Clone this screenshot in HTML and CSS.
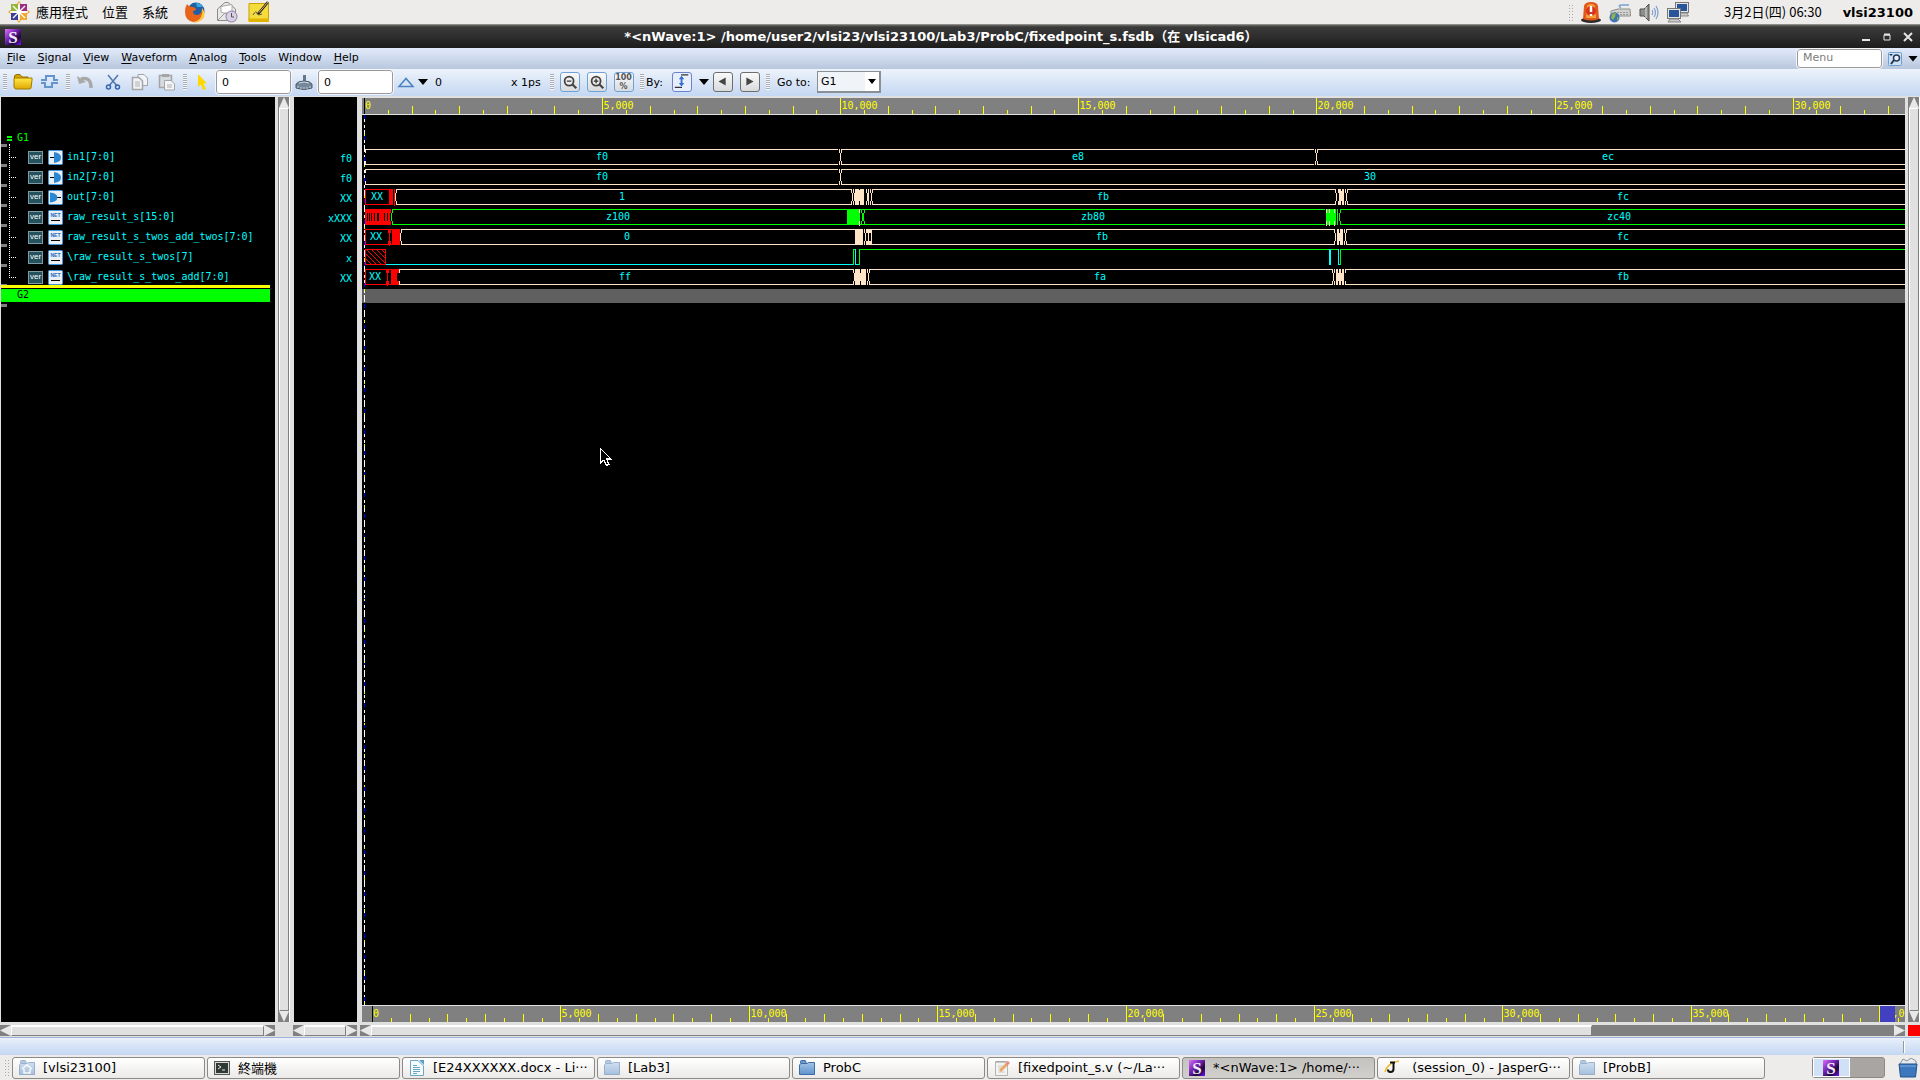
FILE: index.html
```html
<!DOCTYPE html>
<html lang="zh-Hant">
<head>
<meta charset="utf-8">
<title>nWave</title>
<link rel="stylesheet" href="styles.css">
</head>
<body>
<svg class="defs" aria-hidden="true">
  <defs>
    <linearGradient id="purple" x1="0" y1="0" x2="1" y2="1"><stop offset="0" stop-color="#e070ff"/><stop offset=".45" stop-color="#6a1fa8"/><stop offset=".7" stop-color="#1c0838"/><stop offset="1" stop-color="#7a10ff"/></linearGradient>
    <linearGradient id="blueFolder" x1="0" y1="0" x2="0" y2="1"><stop offset="0" stop-color="#a3c4e8"/><stop offset="1" stop-color="#5f93cc"/></linearGradient>
    <linearGradient id="gold" x1="0" y1="0" x2="0" y2="1"><stop offset="0" stop-color="#ffe94a"/><stop offset="1" stop-color="#e0a800"/></linearGradient>
    <pattern id="hatch" width="5" height="5" patternUnits="userSpaceOnUse"><path d="M0 0L5 5M-1 4L1 6M4 -1L6 1" stroke="#f00" stroke-width="1"/></pattern>
    <symbol id="s-logo" viewBox="0 0 16 16"><rect width="16" height="16" fill="url(#purple)"/><text x="8" y="14" text-anchor="middle" font-family="Liberation Serif, serif" font-weight="bold" font-size="17" fill="#f4ecfa">S</text></symbol>
    <symbol id="folder" viewBox="0 0 16 16"><path d="M1.500 3.500V1.500Q1.500 .5 2.500 .5H6Q7 .5 7 2.500V3.500" fill="#6f9acb" stroke="#3d6ba5"/><path d="M.5 14.500V5L2 3.500H8L9.500 2.500H15.500V14.500Z" fill="url(#blueFolder)" stroke="#3d6ba5"/></symbol>
    <symbol id="net" viewBox="0 0 15 15"><rect x=".5" y=".5" width="14" height="14" rx="1" fill="#eceff2" stroke="#3d94e0"/><text x="7.500" y="7" text-anchor="middle" font-family="Liberation Sans, sans-serif" font-weight="bold" font-size="5" fill="#1669c4">NET</text><path d="M3 10.500H12" stroke="#000"/></symbol>
    <symbol id="in-port" viewBox="0 0 15 15"><rect x=".5" y=".5" width="14" height="14" rx="1" fill="#eceff2" stroke="#3d94e0"/><path d="M2 7.500H7" stroke="#000"/><path d="M6 2Q13 3 13 7.500T6 13Z" fill="#2b86d4"/></symbol>
    <symbol id="out-port" viewBox="0 0 15 15"><rect x=".5" y=".5" width="14" height="14" rx="1" fill="#eceff2" stroke="#3d94e0"/><path d="M9 7.500H13" stroke="#000"/><path d="M2 2.500Q9 3 9.500 7.500Q9 12 2 12.500Z" fill="#2b86d4"/></symbol>
  </defs>
</svg>

<header class="panel">
  <nav class="panel-menus">
    <svg class="i22" viewBox="0 0 22 22"><path d="M11 0L14 4H8ZM11 22L8 18H14ZM0 11L4 8V14ZM22 11L18 14V8Z" fill="#e8a33a"/><path d="M3 3H10V10H3Z" fill="#93b63a"/><path d="M12 3H19V10H12Z" fill="#9a2d86"/><path d="M3 12H10V19H3Z" fill="#3b3f96"/><path d="M12 12H19V19H12Z" fill="#efa72f"/><path d="M5 5L17 17M17 5L5 17M11 2V20M2 11H20" stroke="#fff" stroke-width="1.300"/></svg>
    <button class="panel-item">應用程式</button>
    <button class="panel-item">位置</button>
    <button class="panel-item">系統</button>
    <button class="launcher" aria-label="Firefox"><svg class="i22" viewBox="0 0 22 22"><circle cx="12" cy="10" r="8.500" fill="#1e5fa8"/><path d="M12 2Q17 2 19 6L13 6Z" fill="#35a6e0"/><path d="M3 3Q5 6 8 6Q12 6 12 9L9 10Q9 14 13 14Q18 14 18 7Q22 12 19 17Q15 22 9 21Q1 19 1 11Q1 6 3 3Z" fill="#e8641b"/><path d="M18 7Q22 12 19 17Q15 22 9 21Q15 20 17 16Q19 12 18 7Z" fill="#ffcb2e"/></svg></button>
    <button class="launcher" aria-label="Mail"><svg class="i22" viewBox="0 0 22 22"><path d="M1.500 8L9 1.500H12L19.500 8V19.500H1.500Z" fill="#e8e8e6" stroke="#8b8b88"/><path d="M5 5.500L16 3.500V11L10.500 13L5 11Z" fill="#fff" stroke="#aaa"/><path d="M2 19L9 12H12L19 19" fill="none" stroke="#999"/><circle cx="15.500" cy="15.500" r="5.500" fill="#d9d0e4" stroke="#8e7aa6"/><path d="M15.500 12V16H18" fill="none" stroke="#555"/></svg></button>
    <button class="launcher" aria-label="Notes"><svg class="i22" viewBox="0 0 22 22"><path d="M1 2.500H20.500V19.500H1Z" fill="#f5dc3d" stroke="#c9a100"/><path d="M.5 17.500H21V21H.5Z" fill="#e0b400"/><path d="M5 14Q8 9 9 12Q9 15 14 13" fill="none" stroke="#555"/><path d="M20 1L10 13" stroke="#222" stroke-width="2.500"/><path d="M20 1L11 11.500" stroke="#d8b26a" stroke-width="1"/></svg></button>
  </nav>
  <div class="tray">
    <span class="dots"></span>
    <svg class="i22" viewBox="0 0 22 22"><ellipse cx="11" cy="19" rx="10" ry="3" fill="#2a2a2a"/><path d="M3 18L4 5Q5 1 11 1T18 5L19 18Q11 21 3 18Z" fill="#e2571b"/><path d="M6 17L7 5Q8 3 11 3T15 5L16 17Z" fill="#f8a33a"/><circle cx="11" cy="10" r="5" fill="#d8331c"/><path d="M11 5V11M11 13V15" stroke="#fff" stroke-width="2.500"/></svg>
    <svg class="i22" viewBox="0 0 22 22"><path d="M2 10L9 8H21L21.500 15H2Z" fill="#d2d3cf" stroke="#8d8f8b"/><path d="M5 11.500H20M5 13.500H20" stroke="#999" stroke-dasharray="2 1"/><path d="M12 7Q8 4 13 4H20" fill="none" stroke="#7ba1cf" stroke-width="1.500"/><circle cx="5.500" cy="16.500" r="5" fill="#3f75b5"/><path d="M3 13L7 12L6 16L4 19L2 17ZM8 16L10 17L8 20Z" fill="#8fb34a"/></svg>
    <svg class="i22" viewBox="0 0 22 22"><path d="M2 8H6L11 3V20L6 15H2Z" fill="#8c8f8b" stroke="#4f514e"/><path d="M8 6V17" stroke="#ddd"/><path d="M14 9Q15.500 11.500 14 14M16 7Q19 11.500 16 16M18 5Q22 11.500 18 18" fill="none" stroke="#7c9fcc" stroke-width="1.200"/></svg>
    <svg class="i22" viewBox="0 0 22 22"><rect x="8.500" y="1.500" width="13" height="10" fill="#e4e4e0" stroke="#777"/><rect x="10" y="3" width="10" height="7" fill="#28549b"/><path d="M13 12H20L21.500 15H12Z" fill="#ccc" stroke="#888"/><rect x=".5" y="7.500" width="13" height="10" fill="#e4e4e0" stroke="#777"/><rect x="2" y="9" width="10" height="7" fill="#28549b"/><path d="M3 18H11L14 21H1Z" fill="#ccc" stroke="#888"/></svg>
    <span class="clock">3月2日(四) 06:30</span>
    <span class="user">vlsi23100</span>
  </div>
</header>

<div class="titlebar">
  <svg class="i16"><use href="#s-logo"/></svg>
  <h1 class="title">*&lt;nWave:1&gt; /home/user2/vlsi23/vlsi23100/Lab3/ProbC/fixedpoint_s.fsdb（在 vlsicad6）</h1>
  <button class="winbtn" aria-label="Minimize"><svg class="i10" viewBox="0 0 10 10"><path d="M1 8H9" stroke="#e4e4e4" stroke-width="2"/></svg></button>
  <button class="winbtn" aria-label="Maximize"><svg class="i10" viewBox="0 0 10 10"><path d="M2 3H8V8H2Z" fill="none" stroke="#e4e4e4" stroke-width="1"/><path d="M2 2.500H8" stroke="#e4e4e4" stroke-width="2"/></svg></button>
  <button class="winbtn" aria-label="Close"><svg class="i10" viewBox="0 0 10 10"><path d="M1 1L9 9M9 1L1 9" stroke="#e4e4e4" stroke-width="2"/></svg></button>
</div>

<div class="menubar">
  <nav class="menus">
    <button><u>F</u>ile</button><button><u>S</u>ignal</button><button><u>V</u>iew</button><button><u>W</u>aveform</button><button><u>A</u>nalog</button><button><u>T</u>ools</button><button>W<u>i</u>ndow</button><button><u>H</u>elp</button>
  </nav>
  <div class="search">
    <input class="field menu-field" type="text" placeholder="Menu" aria-label="Menu search">
    <button aria-label="Find command"><svg class="i14" viewBox="0 0 14 14"><rect x=".5" y=".5" width="13" height="13" rx="1" fill="#cfe0f3" stroke="#6f9fd0"/><circle cx="8.500" cy="6" r="3" fill="#eef" stroke="#233a55" stroke-width="1.500"/><path d="M6 8L3 12" stroke="#233a55" stroke-width="2"/><path d="M1 2H5L3 4Z" fill="#233a55"/></svg></button>
    <span class="caret"></span>
  </div>
</div>

<div class="toolbar">
  <span class="grip"></span>
  <button class="tool" aria-label="Open"><svg class="i20" viewBox="0 0 20 20"><path d="M1.500 15V4Q2 2.500 4 2.500H7L9 5H15V8" fill="#d9a600" stroke="#8f6d00"/><path d="M1 15V6H19V8L18 16Q18 17 16 17H3Q1.500 17 1 15Z" fill="url(#gold)" stroke="#a07a00"/></svg></button>
  <button class="tool" aria-label="Get signals"><svg class="i20" viewBox="0 0 20 20"><path d="M1 8H6V4H14V8H18M1 11H5V15H12V11H18" fill="none" stroke="#6594cc" stroke-width="2"/></svg></button>
  <span class="grip"></span>
  <button class="tool" aria-label="Undo"><svg class="i20" viewBox="0 0 20 20"><path d="M5 7Q15 4 15 16" fill="none" stroke="#a8a8a8" stroke-width="3.500"/><path d="M1 4L3 12L10 10Z" fill="#a8a8a8"/></svg></button>
  <button class="tool" aria-label="Cut"><svg class="i20" viewBox="0 0 20 20"><path d="M5 3L14 14M15 3L6 14" stroke="#5478ae" stroke-width="1.500"/><circle cx="5.500" cy="15" r="2" fill="none" stroke="#3565b0" stroke-width="1.500"/><circle cx="14.500" cy="15" r="2" fill="none" stroke="#3565b0" stroke-width="1.500"/></svg></button>
  <button class="tool" aria-label="Copy"><svg class="i20" viewBox="0 0 20 20"><path d="M8 2.500H14L17.500 6V13.500H8Z" fill="#f0f3f7" stroke="#a5a5a5"/><path d="M2.500 5.500H9L12.500 9V17.500H2.500Z" fill="#f0f3f7" stroke="#a5a5a5" stroke-width="1.500"/><path d="M5 10H10M5 12H10M5 14H10" stroke="#b0b0b0"/></svg></button>
  <button class="tool" aria-label="Paste"><svg class="i20" viewBox="0 0 20 20"><path d="M2.500 3.500H14.500V15.500H2.500Z" fill="#d6dbe2" stroke="#a5a5a5" stroke-width="1.500"/><path d="M5 2H12V5H5Z" fill="#a5a5a5"/><path d="M7.500 8.500H14L17.500 12V18H7.500Z" fill="#f3f5f8" stroke="#a5a5a5"/><path d="M10 13H15M10 15H15" stroke="#b0b0b0"/></svg></button>
  <span class="grip"></span>
  <button class="tool" aria-label="Select cursor"><svg class="i20" viewBox="0 0 20 20"><path d="M5 2V15L8 12.500L10 18L13 17L10.500 11.500H14Z" fill="#ffd800"/></svg></button>
  <input class="field time-field" type="text" value="0" aria-label="Cursor time">
  <button class="tool" aria-label="Snap marker"><svg class="i20" viewBox="0 0 20 20"><path d="M8 3H11V10H8Z" fill="#65788a"/><path d="M1 12Q3 9 9 9T17 12V16Q9 19 1 16Z" fill="#75889a" stroke="#4d5c6a"/><path d="M4 11Q9 9 14 11" stroke="#d0dae4" fill="none"/><path d="M3 14V16M6 15V17M9 15V17M12 15V17M15 14V16" stroke="#ccd"/></svg></button>
  <input class="field time-field" type="text" value="0" aria-label="Marker time">
  <button class="tool delta" aria-label="Delta"><svg class="i20" viewBox="0 0 20 20"><path d="M2 14.500L9 6.500L16 14.500Z" fill="#d5e4f6" stroke="#4c80bf" stroke-width="1.500"/></svg></button>
  <span class="caret"></span>
  <output class="delta-value">0</output>
  <span class="unit">x 1ps</span>
  <span class="grip"></span>
  <button class="tool boxed" aria-label="Zoom out"><svg class="i20" viewBox="0 0 20 20"><circle cx="9" cy="9" r="5" fill="#eee" stroke="#444" stroke-width="2"/><path d="M12.500 12.500L17 17" stroke="#444" stroke-width="2.500"/><path d="M6.500 9H11.500" stroke="#333" stroke-width="1.500"/></svg></button>
  <button class="tool boxed" aria-label="Zoom in"><svg class="i20" viewBox="0 0 20 20"><circle cx="9" cy="9" r="5" fill="#eee" stroke="#444" stroke-width="2"/><path d="M12.500 12.500L17 17" stroke="#444" stroke-width="2.500"/><path d="M6.500 9H11.500M9 6.500V11.500" stroke="#333" stroke-width="1.500"/></svg></button>
  <button class="tool boxed" aria-label="Zoom all"><span class="zoom-all">100<br>%</span></button>
  <span class="grip"></span>
  <span class="by">By:</span>
  <button class="tool boxed edge" aria-label="Any edge"><svg class="i20" viewBox="0 0 20 20"><path d="M9 2H17M2 16H10" stroke="#333" stroke-width="1.500"/><path d="M9.500 5V13" stroke="#2f6fd6" stroke-width="2"/><path d="M6.500 7L9.500 3L12.500 7ZM6.500 11L9.500 15L12.500 11Z" fill="#2f6fd6"/></svg></button>
  <span class="caret"></span>
  <button class="tool boxed gray" aria-label="Previous"><svg class="i20" viewBox="0 0 20 20"><path d="M13 5V14L5 9.500Z" fill="#444"/></svg></button>
  <button class="tool boxed gray" aria-label="Next"><svg class="i20" viewBox="0 0 20 20"><path d="M6 5V14L14 9.500Z" fill="#444"/></svg></button>
  <span class="grip"></span>
  <label class="goto" for="goto">Go to:</label>
  <span class="combo"><select id="goto"><option>G1</option></select><span class="combo-arrow"><span class="caret small"></span></span></span>
</div>

<main class="workspace">
  <section class="tree">
    <div class="group"><span class="expander"></span>G1</div>
    <ul class="signals">
      <li><span class="ver">ver</span><svg class="i15"><use href="#in-port"/></svg>in1[7:0]</li>
      <li><span class="ver">ver</span><svg class="i15"><use href="#in-port"/></svg>in2[7:0]</li>
      <li><span class="ver">ver</span><svg class="i15"><use href="#out-port"/></svg>out[7:0]</li>
      <li><span class="ver">ver</span><svg class="i15"><use href="#net"/></svg>raw_result_s[15:0]</li>
      <li><span class="ver">ver</span><svg class="i15"><use href="#net"/></svg>raw_result_s_twos_add_twos[7:0]</li>
      <li><span class="ver">ver</span><svg class="i15"><use href="#net"/></svg>\raw_result_s_twos[7]</li>
      <li><span class="ver">ver</span><svg class="i15"><use href="#net"/></svg>\raw_result_s_twos_add[7:0]</li>
    </ul>
    <div class="group selected">G2</div>
  </section>
  <div class="vbar"><span class="arrow up"></span><span class="thumb"></span><span class="arrow down"></span></div>
  <ul class="values">
    <li>f0</li><li>f0</li><li>XX</li><li>xXXX</li><li>XX</li><li>x</li><li>XX</li>
  </ul>
  <section class="wave">
    <svg class="ruler" data-origin="2" data-step="47.62" data-max="34"></svg>
    <svg class="plot">
      <g class="bus">
        <path d="M3 34.500H476M480 34.500H952M956 34.500H6000M3 49.500H476M480 49.500H952M956 49.500H6000M3.500 34V38M3.500 46V50M477.500 34V38M479.500 34V38M478.500 38V46M477.500 46V50M479.500 46V50M953.500 34V38M955.500 34V38M954.500 38V46M953.500 46V50M955.500 46V50"/>
        <path d="M3 54.500H476M480 54.500H6000M3 69.500H476M480 69.500H6000M3.500 54V58M3.500 66V70M477.500 54V58M479.500 54V58M478.500 58V66M477.500 66V70M479.500 66V70"/>
        <path d="M34 74.500H489M511 74.500H973M986 74.500H6000M34 89.500H489M511 89.500H973M986 89.500H6000M34.500 74V78M33.500 78V86M34.500 86V90M489.500 74V78M490.500 78V86M489.500 86V90M491.500 74V78M492.500 78V86M491.500 86V90M504.500 74V78M505.500 78V86M504.500 86V90M506.500 74V90M508.500 74V78M509.500 78V86M508.500 86V90M510.500 74V78M510.500 86V90M973.500 74V78M974.500 78V86M973.500 86V90M976.500 74V78M976.500 86V90M983.500 74V78M984.500 78V86M983.500 86V90M985.500 74V78M985.500 86V90"/>
        <path d="M39 114.500H494M510 114.500H972M985 114.500H6000M39 129.500H494M510 129.500H972M985 129.500H6000M39.500 114V118M38.500 118V126M39.500 126V130M502.500 114V118M503.500 118V126M502.500 126V130M506.500 114V130M509.500 114V130M972.500 114V118M973.500 118V126M972.500 126V130M982.500 114V118M983.500 118V126M982.500 126V130M984.500 114V118M984.500 126V130"/>
        <path d="M37 154.500H491M513 154.500H970M984 154.500H6000M37 169.500H491M507 169.500H970M984 169.500H6000M37.500 154V158M37.500 166V170M491.500 154V158M492.500 158V166M491.500 166V170M505.500 154V158M506.500 158V166M505.500 166V170M507.500 154V158M507.500 166V170M970.500 154V158M971.500 158V166M970.500 166V170M972.500 154V158M972.500 166V170M983.500 154V158M983.500 166V170M507 154.500H513"/>
      </g>
      <g class="bus-fill">
        <path d="M493 74H497V75H498V74H502V90H498V86H497V90H493ZM977 74H979V76H980V74H982V90H980V86H979V90H977ZM493 114H501V130H493ZM504 114H510V118H504ZM504 126H510V130H504ZM975 114H977V118H978V114H981V130H978V126H977V130H975ZM493 154H498V158H499V154H504V170H499V166H498V170H493ZM974 154H976V158H977V154H979V158H980V154H982V170H980V166H979V170H977V166H976V170H974Z"/>
      </g>
      <g class="green">
        <path d="M30 94.500H963M979 94.500H6000M30 109.500H963M979 109.500H6000M30.500 94V98M29.500 98V106M30.500 106V110M500.500 98V106M499.500 94V98M499.500 106V110M502.500 94V98M501.500 98V106M502.500 106V110M975.500 94V110M977.500 98V106M978.500 94V98M978.500 106V110M491.500 150V134.500H494M497.500 150V134.500H976M978.500 150V134.500H6000"/>
        <path class="solid" d="M485 94H498V110H485ZM964 94H974V110H964Z"/>
      </g>
      <path class="bus" d="M497.500 94V98M497.500 106V111M964.500 94V98M967.500 94V98M972.500 94V98M964.500 106V111M967.500 106V111M972.500 106V111"/>
      <path class="cyan" d="M23 149.500H491M493.500 134V149.500H497M967.500 134V150M968.500 134V150M976.500 134V149.500H978"/>
      <g class="red">
        <path d="M3 74.500H28M3 89.500H28M3.500 74V90M3 114.500H30M3 129.500H30M3.500 114V130M27.500 114V131M26.500 114V118M28.500 114V118M26.500 126V130M28.500 126V130M3 154.500H30M3 169.500H30M3.500 154V170M25.500 154V171M24.500 154V158M26.500 154V158M24.500 166V170M26.500 166V170M3 134.500H23.500V149.500H3ZM32.500 74V91"/>
        <path class="solid" d="M27 74H31V90H27ZM3 94H29V98H28V106H29V110H3ZM30 114H38V130H30ZM29 154H35V170H29ZM35 154H37V158H35ZM35 166H37V170H35Z"/>
        <rect x="3" y="134" width="20" height="16" fill="url(#hatch)" stroke="none"/>
      </g>
      <path class="slits" d="M5.500 98V106M7.500 98V106M9.500 98V106M12.500 98V106M15.500 98V106M16.500 98V106M22.500 98V106M25.500 98V106"/>
      <rect class="strip" x="0" y="174" width="100%" height="14"/>
      <g class="cursor"><path class="base" d="M2.500 0V4000"/><path class="blue" d="M2.500 0V4000"/><path class="yellow" d="M2.500 19V4000"/></g>
      <g class="labels">
        <text x="234" y="45">f0</text><text x="710" y="45">e8</text><text x="1240" y="45">ec</text>
        <text x="234" y="65">f0</text><text x="1002" y="65">30</text>
        <text x="9" y="85">XX</text><text x="257" y="85">1</text><text x="735" y="85">fb</text><text x="1255" y="85">fc</text>
        <text x="244" y="105">z100</text><text x="719" y="105">zb80</text><text x="1245" y="105">zc40</text>
        <text x="8" y="125">XX</text><text x="262" y="125">0</text><text x="734" y="125">fb</text><text x="1255" y="125">fc</text>
        <text x="7" y="165">XX</text><text x="257" y="165">ff</text><text x="732" y="165">fa</text><text x="1255" y="165">fb</text>
      </g>
      <path d="M238.500 333.500V348L242 345L244.500 350.500L247 349.500L244.500 344H249Z" fill="#000" stroke="#fff" stroke-width="1.200"/>
    </svg>
    <svg class="ruler overview" data-origin="10" data-step="37.68" data-max="42" data-view="1518"></svg>
  </section>
  <div class="vbar"><span class="arrow up"></span><span class="thumb"></span><span class="arrow down"></span></div>

  <div class="hbar"><span class="arrow left"></span><span class="thumb"></span><span class="arrow right"></span></div>
  <span></span>
  <div class="hbar"><span class="arrow left"></span><span class="thumb"></span><span class="arrow right"></span></div>
  <div class="hbar"><span class="arrow left"></span><span class="thumb partial"></span><span class="arrow right"></span></div>
  <span class="alert"></span>
</main>

<div class="statusbar"><span class="notch"></span></div>

<footer class="taskbar">
  <span class="dots"></span>
  <div class="tasks">
    <button class="task"><svg class="i16 faded" viewBox="0 0 16 16"><use href="#folder"/><path d="M3 9L8 5L13 9M5 9V13H11V9" fill="none" stroke="#fff" stroke-width="1.500"/></svg><span>[vlsi23100]</span></button>
    <button class="task"><svg class="i16" viewBox="0 0 16 16"><rect x=".5" y="1.500" width="15" height="13" fill="#d8d8d4" stroke="#555"/><rect x="2" y="3" width="12" height="10" fill="#2f3a34"/><path d="M4 5L7 7L4 9M8 10H11" fill="none" stroke="#e8e8e8"/></svg><span>終端機</span></button>
    <button class="task"><svg class="i16" viewBox="0 0 16 16"><path d="M1.500 .5H9L14.500 6V15.500H1.500Z" fill="#f4fafd" stroke="#6ba6c4"/><path d="M10 0H15V5Z" fill="#5a9fc4"/><path d="M4 5.500H8M4 7.500H11M4 9.500H11M4 11.500H11M4 13.500H8" stroke="#6ba6c4"/></svg><span>[E24XXXXXX.docx - Li···</span></button>
    <button class="task"><svg class="i16 faded"><use href="#folder"/></svg><span>[Lab3]</span></button>
    <button class="task"><svg class="i16"><use href="#folder"/></svg><span>ProbC</span></button>
    <button class="task"><svg class="i16" viewBox="0 0 16 16"><path d="M1.500 1.500H13.500V15.500H1.500Z" fill="#f3f3f1" stroke="#b5b5b1"/><path d="M3 1V3M5 1V3M7 1V3M9 1V3M11 1V3" stroke="#999"/><path d="M4 6H10M4 8H8M4 12H11" stroke="#ccc"/><path d="M6 11L13 4" stroke="#eaa868" stroke-width="3"/><path d="M12.500 4.500L15 2" stroke="#e58c8c" stroke-width="3"/></svg><span>[fixedpoint_s.v (~/La···</span></button>
    <button class="task active"><svg class="i16"><use href="#s-logo"/></svg><span>*&lt;nWave:1&gt; /home/···</span></button>
    <button class="task"><svg class="i16" viewBox="0 0 16 16"><path d="M1 12Q3 3 15 1" fill="none" stroke="#f2b92e" stroke-width="1.500"/><path d="M6 2.500H11M9.500 3V9Q9.500 12 6.500 12Q4 12 4 9.500" fill="none" stroke="#111" stroke-width="2"/></svg><span>&nbsp;(session_0) - JasperG···</span></button>
    <button class="task"><svg class="i16 faded"><use href="#folder"/></svg><span>[ProbB]</span></button>
  </div>
  <div class="pager"><span class="desk current"><svg class="i16"><use href="#s-logo"/></svg></span><span class="desk"></span></div>
  <button class="trash" aria-label="Trash"><svg class="i20" viewBox="0 0 20 20"><path d="M2 6L5 1L9 3L13 0L18 3V7H2Z" fill="#e6eaee" stroke="#8a949e"/><path d="M1 6H19L17.500 19H2.500Z" fill="#3d77bd" stroke="#23518c"/><path d="M2 8H18" stroke="#7eaae0"/></svg></button>
</footer>
<script src="rulers.js"></script>
</body>
</html>
```

FILE: styles.css
```css
* { box-sizing: border-box; }
body {
  margin: 0; height: 100vh; display: flex; flex-direction: column; overflow: hidden;
  font-family: "DejaVu Sans", "Noto Sans CJK TC", sans-serif; font-size: 11px; color: #000; background: #e0e0e0;
}
button { margin: 0; padding: 0; border: 0; background: none; font: inherit; color: inherit; }
ul { list-style: none; margin: 0; padding: 0; }
svg { display: block; flex: none; }
.defs { position: absolute; width: 0; height: 0; }
.i10 { width: 10px; height: 10px; }
.i14 { width: 14px; height: 14px; }
.i15 { width: 15px; height: 15px; }
.i16 { width: 16px; height: 16px; }
.i20 { width: 20px; height: 20px; }
.i22 { width: 22px; height: 22px; }
.faded { opacity: .5; }

/* desktop panel */
.panel { flex: none; height: 25px; display: flex; justify-content: space-between; align-items: center; background: #edecea; border-bottom: 1px solid #8c8c88; padding: 0 7px 0 8px; }
.panel-menus { display: flex; align-items: center; }
.panel-item { font-family: "Noto Sans CJK TC", sans-serif; font-size: 13px; line-height: 22px; margin-right: 8px; padding: 0 3px; }
.panel-menus > .i22 { margin-right: 3px; }
.panel-item + .launcher { margin-left: 5px; }
.launcher { margin-right: 10px; }
.tray { display: flex; align-items: center; gap: 7px; }
.dots { width: 5px; height: 17px; background: radial-gradient(circle, #aaa 1px, transparent 1px) 0 0 / 3px 3px; }
.clock { font-family: "Noto Sans CJK TC", sans-serif; font-size: 13px; line-height: 22px; margin: 0 14px 0 28px; }
.user { font-weight: bold; font-size: 13px; }

.titlebar { flex: none; height: 23px; display: flex; align-items: center; padding: 0 7px 0 5px; gap: 11px; background: linear-gradient(#6a6a68 0, #3a3a3a 2px, #2e2e2e 50%, #1c1c1c); color: #fff; }
.title { flex: 1; margin: 0; text-align: center; font-size: 13px; line-height: 22px; font-weight: bold; }
.winbtn { width: 10px; }

.menubar { flex: none; height: 21px; display: flex; justify-content: space-between; align-items: center; background: linear-gradient(#e2ebfb, #b8c7dd); }
.menus { display: flex; gap: 12px; padding: 0 7px 2px; }
.menus button { line-height: 18px; }
u { text-underline-offset: 2px; }
.search { display: flex; align-items: center; gap: 6px; padding-right: 2px; }
.field { border: 1px solid #9a9a9a; border-radius: 3px; background: #fff; font: inherit; padding: 0 5px; outline: 1px solid #f4f6fa; }
.menu-field { width: 85px; height: 19px; padding-bottom: 2px; }
.menu-field::placeholder { color: #7c7c7c; opacity: 1; }
.caret { flex: none; width: 10px; height: 6px; background: #000; clip-path: polygon(0 0, 100% 0, 50% 100%); }
.caret.small { width: 8px; height: 5px; }

.toolbar { flex: none; height: 27px; display: flex; align-items: center; background: linear-gradient(#edf3fb, #c4d7f2); padding-bottom: 1px; }
.grip { flex: none; width: 4px; height: 16px; margin: 0 2px 0 3px; background: repeating-linear-gradient(#a9adb2 0 1px, #f5f7fa 1px 2px); }
.tool { flex: none; width: 27px; height: 24px; display: flex; justify-content: center; align-items: center; }
.boxed > * { width: 20px; height: 20px; border: 1px solid #6fa3d8; border-radius: 3px; background: linear-gradient(#fafafa, #d8dadd); }
.boxed.edge > * { border-color: #6b83cc; background: #e8eefb; }
.boxed.gray > * { border-color: #6e6e6e; }
.zoom-all { font-size: 8px; line-height: 9px; font-weight: bold; color: #555; text-align: center; }
.time-field { flex: none; width: 75px; height: 24px; }
.delta { margin-right: -2px; }
.delta-value { margin-left: 7px; width: 76px; }
.unit { width: 36px; }
.by { width: 22px; }
.edge { margin-right: 4px; }
.goto { margin-left: 5px; width: 40px; }
.combo { position: relative; width: 64px; height: 22px; }
.combo select { appearance: none; width: 100%; height: 100%; margin: 0; padding: 0 3px; border: 1px solid #8b9097; border-bottom-width: 2px; background: #f0f4f9; font: inherit; color: inherit; }
.combo-arrow { position: absolute; inset: 1px 1px 2px auto; width: 15px; display: flex; align-items: center; justify-content: center; background: #fff; border-right: 1px solid #8b9097; pointer-events: none; }

/* signal tree, value column, waveform, with their scroll bars */
.workspace { flex: 1; min-height: 0; display: grid; gap: 3px; grid-template-columns: 275px 12px 64px minmax(0, 1fr) 12px; grid-template-rows: minmax(0, 1fr) 11px; padding: 1px 0; background: #e0e0e0; font-family: "DejaVu Sans Mono", monospace; font-size: 10px; line-height: 20px; color: #0ff; }
.tree { border-left: 1px solid #e0e0e0; padding: 31px 5px 0 0; background: repeating-linear-gradient(#808080 0 3px, transparent 3px 20px) 0 47px / 6px 163px no-repeat, #000; }
.group { display: flex; align-items: center; height: 20px; padding-left: 6px; color: #0f0; gap: 5px; }
.expander { width: 5px; height: 5px; border: solid #0f0; border-width: 2px 0; }
.signals { position: relative; margin-top: -1px; }
.signals::before { content: ""; position: absolute; left: 8px; top: -3px; bottom: 9px; border-left: 1px dotted #fff; }
.signals li { display: flex; align-items: center; height: 20px; padding-left: 8px; white-space: pre; }
.signals li::before { content: ""; width: 7px; margin-right: 12px; border-top: 1px dotted #fff; }
.signals svg { margin: 0 4px 0 5px; }
.ver { width: 15px; height: 13px; border: 1px solid #7d9ba3; background: #25525e; color: #fff; font: 8px/10px "Liberation Sans", sans-serif; text-align: center; }
.selected { height: 17px; margin-top: -2px; padding-left: 16px; background: #0f0; border-top: 3px solid #ff0; color: #000; box-shadow: inset 0 1px #000; }
.values { background: #000; border-left: 1px solid #e0e0e0; padding: 52px 5px 0 0; text-align: right; }
.values li { height: 20px; }
.wave { display: flex; flex-direction: column; min-width: 0; border-left: 2px solid #e0e0e0; border-top: 1px solid #e0e0e0; background: #000; }
.ruler { width: 100%; height: 17px; background: #808080; border-bottom: 1px solid #e0e0e0; font-size: 10px; fill: #ff0; shape-rendering: crispEdges; overflow: hidden; }
.overview { border-bottom: 0; border-top: 1px solid #e0e0e0; }
.ruler path { stroke: #ff0; }
.ruler .origin { stroke: #000; }
.ruler .view-edge { fill: #4040c0; }
.plot { flex: 1; min-height: 0; width: 100%; overflow: hidden; shape-rendering: crispEdges; fill: none; }
.bus { stroke: #ffe4c8; }
.bus-fill { fill: #ffe4c8; }
.green { stroke: #0f0; }
.green .solid { fill: #0f0; stroke: none; }
.cyan { stroke: #0ff; }
.red { stroke: #f00; }
.red .solid { fill: #f00; stroke: none; }
.slits { stroke: #000; }
.strip { fill: #606060; }
.cursor .base { stroke: #fff; stroke-dasharray: 7 3 3 2; }
.cursor .blue { stroke: #00f; stroke-dasharray: 4 17; }
.cursor .yellow { stroke: #ff0; stroke-dasharray: 2 29; }
.labels { fill: #0ff; }

.vbar, .hbar { display: flex; background: #808080; min-width: 0; }
.vbar { flex-direction: column; border-left: 1px solid #808080; border-right: 1px solid #fff; }
.thumb { flex: 1; background: #e0e0e0; border: 1px solid #fff; border-right-color: #808080; border-bottom-color: #808080; }
.hbar .thumb { border-top-width: 2px; }
.thumb.partial { flex: none; width: 79%; }
.partial + .arrow { margin-left: auto; }
.arrow { flex: none; width: 11px; height: 11px; background: #e8e8e8; }
.vbar .arrow { width: 10px; }
.up { clip-path: polygon(50% 0, 100% 100%, 0 100%); }
.down { clip-path: polygon(0 0, 100% 0, 50% 100%); }
.left { clip-path: polygon(0 50%, 100% 0, 100% 100%); }
.right { clip-path: polygon(0 0, 100% 50%, 0 100%); }
.alert { background: #f00; }

.statusbar { flex: none; height: 18px; display: flex; justify-content: flex-end; align-items: center; padding-right: 15px; border-top: 1px solid #9db4d8; background: linear-gradient(#e8f0fb, #c4d7f2); }
.notch { width: 2px; height: 12px; background: #999; border-right: 1px solid #fff; }

.taskbar { flex: none; height: 25px; display: flex; align-items: center; background: #edecea; padding: 0 2px 0 4px; }
.tasks { flex: 1; min-width: 0; display: flex; gap: 2px; margin-left: 3px; }
.task { flex: 0 1 193px; min-width: 0; height: 22px; display: flex; align-items: center; gap: 8px; padding: 0 6px; border: 1px solid #8c8a86; border-radius: 3px; background: linear-gradient(#fff, #ebeae8); font-size: 13px; white-space: nowrap; overflow: hidden; }
.task.active { background: linear-gradient(#c4c2bf, #d2d0cd); }
.pager { flex: none; display: flex; width: 73px; height: 21px; border: 1px solid #8c8a86; border-radius: 3px; background: #a8a5a2; margin-right: 13px; }
.desk { flex: 1; display: flex; align-items: center; justify-content: center; }
.desk.current { background: #d0e0f6; border: 1px solid #fff; }
.trash { flex: none; width: 20px; height: 20px; }
```

FILE: rulers.js
```js
// Time rulers: a full-height tick and a label every 5,000, shorter ticks every 1,000 and 500.
const NS = "http://www.w3.org/2000/svg";
function add(parent, name, attrs, text) {
  const node = document.createElementNS(NS, name);
  for (const key in attrs) node.setAttribute(key, attrs[key]);
  if (text) node.textContent = text;
  parent.appendChild(node);
}
document.querySelectorAll(".ruler").forEach(function (ruler) {
  const origin = Number(ruler.dataset.origin);
  const step = Number(ruler.dataset.step);
  const max = Number(ruler.dataset.max);
  let ticks = "";
  for (let half = 1; half <= max * 2; half++) {
    const x = Math.round(origin + half * step / 2) + 0.5;
    const top = half % 10 === 0 ? 0 : half % 2 === 0 ? 8 : 12;
    ticks += "M" + x + " " + top + "V16";
    if (half % 10 === 0) add(ruler, "text", { x: x + 1, y: 11 }, (half * 500).toLocaleString("en-US"));
  }
  add(ruler, "path", { d: ticks });
  add(ruler, "path", { "class": "origin", d: "M" + (origin + 0.5) + " 0V16" });
  add(ruler, "text", { x: origin + 1, y: 11 }, "0");
  if (ruler.dataset.view) add(ruler, "rect", { "class": "view-edge", x: ruler.dataset.view, y: 0, width: 15, height: 16 });
});
```
